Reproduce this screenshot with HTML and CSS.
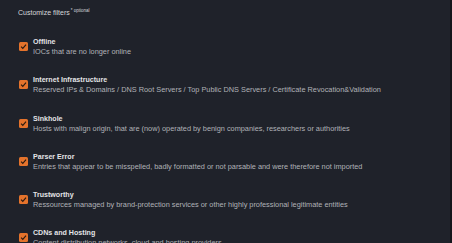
FILE: index.html
```html
<!DOCTYPE html>
<html>
<head>
<meta charset="utf-8">
<link rel="stylesheet" href="styles.css">
</head>
<body>
<div class="panel">
  <div class="header">Customize filters<sup class="opt">* optional</sup></div>
  <ul class="filters">
    <li class="filter">
      <span class="box"><svg viewBox="0 0 10 10"><path d="M2.3 5.2 L4.2 7.1 L7.8 3" /></svg></span>
      <div class="text"><div class="title">Offline</div><div class="desc">IOCs that are no longer online</div></div>
    </li>
    <li class="filter">
      <span class="box"><svg viewBox="0 0 10 10"><path d="M2.3 5.2 L4.2 7.1 L7.8 3" /></svg></span>
      <div class="text"><div class="title">Internet Infrastructure</div><div class="desc">Reserved IPs &amp; Domains / DNS Root Servers / Top Public DNS Servers / Certificate Revocation&amp;Validation</div></div>
    </li>
    <li class="filter">
      <span class="box"><svg viewBox="0 0 10 10"><path d="M2.3 5.2 L4.2 7.1 L7.8 3" /></svg></span>
      <div class="text"><div class="title">Sinkhole</div><div class="desc">Hosts with malign origin, that are (now) operated by benign companies, researchers or authorities</div></div>
    </li>
    <li class="filter">
      <span class="box"><svg viewBox="0 0 10 10"><path d="M2.3 5.2 L4.2 7.1 L7.8 3" /></svg></span>
      <div class="text"><div class="title">Parser Error</div><div class="desc">Entries that appear to be misspelled, badly formatted or not parsable and were therefore not imported</div></div>
    </li>
    <li class="filter">
      <span class="box"><svg viewBox="0 0 10 10"><path d="M2.3 5.2 L4.2 7.1 L7.8 3" /></svg></span>
      <div class="text"><div class="title">Trustworthy</div><div class="desc">Ressources managed by brand-protection services or other highly professional legitimate entities</div></div>
    </li>
    <li class="filter">
      <span class="box"><svg viewBox="0 0 10 10"><path d="M2.3 5.2 L4.2 7.1 L7.8 3" /></svg></span>
      <div class="text"><div class="title">CDNs and Hosting</div><div class="desc">Content distribution networks, cloud and hosting providers</div></div>
    </li>
  </ul>
</div>
</body>
</html>
```
FILE: styles.css
```css
html, body {
  margin: 0;
  padding: 0;
  background: #1f222a;
  height: 100%;
  overflow: hidden;
}
.panel {
  height: 243px;
  box-sizing: border-box;
  border-right: 2px solid #15171c;
  padding: 8px 0 0 18px;
  font-family: "Liberation Sans", Arial, sans-serif;
}
.header {
  font-size: 7px;
  line-height: 10px;
  color: #d6d7da;
}
.opt {
  font-size: 4.5px;
  vertical-align: top;
  position: relative;
  top: -2px;
  margin-left: 1px;
}
.filters {
  list-style: none;
  margin: 20px 0 0 0;
  padding: 0;
  display: flex;
  flex-direction: column;
  gap: 20.3px;
}
.filter {
  display: flex;
  align-items: flex-start;
  gap: 5px;
}
.box {
  width: 9px;
  height: 9px;
  margin-top: 4px;
  margin-left: 1px;
  background: #e4732c;
  border-radius: 1.5px;
  flex: none;
  display: flex;
}
.box svg {
  width: 9px;
  height: 9px;
}
.box path {
  fill: none;
  stroke: #2a1a10;
  stroke-width: 1.3;
}
.title {
  font-size: 7.1px;
  line-height: 9px;
  font-weight: bold;
  color: #e3e4e6;
}
.desc {
  font-size: 7.35px;
  line-height: 9px;
  color: #b0b2b7;
}
```
